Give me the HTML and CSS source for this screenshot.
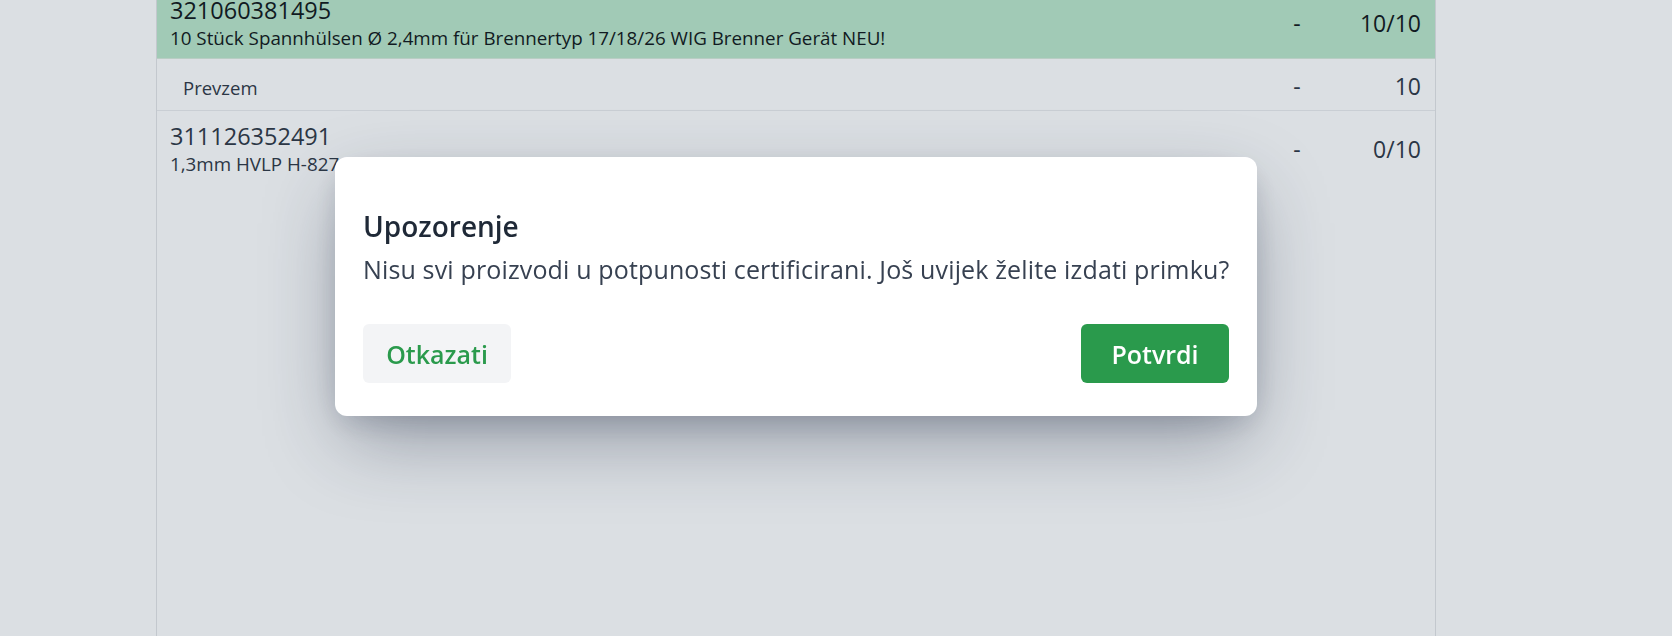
FILE: index.html
```html
<!DOCTYPE html>
<html lang="hr">
<head>
<meta charset="utf-8">
<title>Primka</title>
<link rel="stylesheet" href="styles.css">
</head>
<body>
<main class="panel">
  <div class="list">
    <div class="row row-done">
      <div class="item">
        <div class="code">321060381495</div>
        <div class="desc">10 Stück Spannhülsen Ø 2,4mm für Brennertyp 17/18/26 WIG Brenner Gerät NEU!</div>
      </div>
      <div class="dash">-</div>
      <div class="qty">10/10</div>
    </div>
    <div class="row row-sub">
      <div class="item sub-label">Prevzem</div>
      <div class="dash">-</div>
      <div class="qty">10</div>
    </div>
    <div class="row">
      <div class="item">
        <div class="code">311126352491</div>
        <div class="desc">1,3mm HVLP H-827 Lackierpistole Spritzpistole</div>
      </div>
      <div class="dash">-</div>
      <div class="qty">0/10</div>
    </div>
  </div>
</main>

<div class="overlay">
  <div class="modal" role="dialog" aria-labelledby="modal-title">
    <h2 class="modal-title" id="modal-title">Upozorenje</h2>
    <p class="modal-text">Nisu svi proizvodi u potpunosti certificirani. Još uvijek želite izdati primku?</p>
    <div class="modal-actions">
      <button class="btn btn-cancel" type="button">Otkazati</button>
      <button class="btn btn-confirm" type="button">Potvrdi</button>
    </div>
  </div>
</div>
</body>
</html>
```

FILE: styles.css
```css
* {
  box-sizing: border-box;
}

html, body {
  margin: 0;
  padding: 0;
  height: 100%;
  overflow: hidden;
}

body {
  background: #dbdfe3;
  font-family: "Open Sans", "Noto Sans", sans-serif;
  color: #1f2937;
}

.panel {
  margin-left: 156px;
  margin-top: -15px;
  width: 1280px;
  height: calc(100vh + 15px);
  border-left: 1px solid #c3c8ce;
  border-right: 1px solid #c3c8ce;
  background: #dbdfe3;
}

.list {
  display: flex;
  flex-direction: column;
}

.row {
  display: flex;
  align-items: center;
  padding: 10px 14px 7px 13px;
  border-bottom: 1px solid #c9ced4;
  color: #2b3645;
}

.row:last-child {
  border-bottom: none;
}

.row-done {
  background: #a1cab6;
  color: #111a22;
  border-bottom-color: #b9cdc4;
}

.row-sub {
  height: 52px;
  padding-top: 12px;
  padding-bottom: 0;
  align-items: baseline;
}

.item {
  flex: 1;
  min-width: 0;
}

.code {
  font-size: 23.5px;
  line-height: 30px;
}

.desc {
  font-size: 18.8px;
  line-height: 26px;
  white-space: nowrap;
}

.sub-label {
  font-size: 18.5px;
  line-height: 24px;
  padding-left: 13px;
}

.dash {
  width: 20px;
  text-align: center;
  font-size: 23px;
  line-height: 30px;
}

.qty {
  width: 114px;
  text-align: right;
  font-size: 23px;
  line-height: 30px;
}

.overlay {
  position: fixed;
  top: 0;
  left: 156px;
  width: 1280px;
  height: 100%;
  display: flex;
  justify-content: center;
  align-items: flex-start;
  padding-top: 157px;
}

.modal {
  width: 922px;
  height: 259px;
  background: #ffffff;
  border-radius: 12px;
  padding: 53px 28px 33px;
  box-shadow: 0 30px 80px -10px rgba(30, 41, 66, 0.4), 0 10px 30px -8px rgba(30, 41, 66, 0.22);
  display: flex;
  flex-direction: column;
}

.modal-title {
  margin: 0;
  font-size: 28px;
  line-height: 32px;
  font-weight: 600;
  color: #1f2937;
}

.modal-text {
  margin: 11px 0 0;
  font-size: 25px;
  line-height: 32px;
  letter-spacing: 0.15px;
  white-space: nowrap;
  color: #374151;
}

.modal-actions {
  margin-top: 39px;
  display: flex;
  justify-content: space-between;
}

.btn {
  width: 148px;
  height: 59px;
  border: none;
  border-radius: 6px;
  font-family: "Open Sans", "Noto Sans", sans-serif;
  font-size: 25px;
  font-weight: 600;
  padding: 0;
  cursor: pointer;
}

.btn-cancel {
  background: #f3f4f6;
  color: #2a9a4c;
}

.btn-confirm {
  background: #2a9a4c;
  color: #ffffff;
}
```
